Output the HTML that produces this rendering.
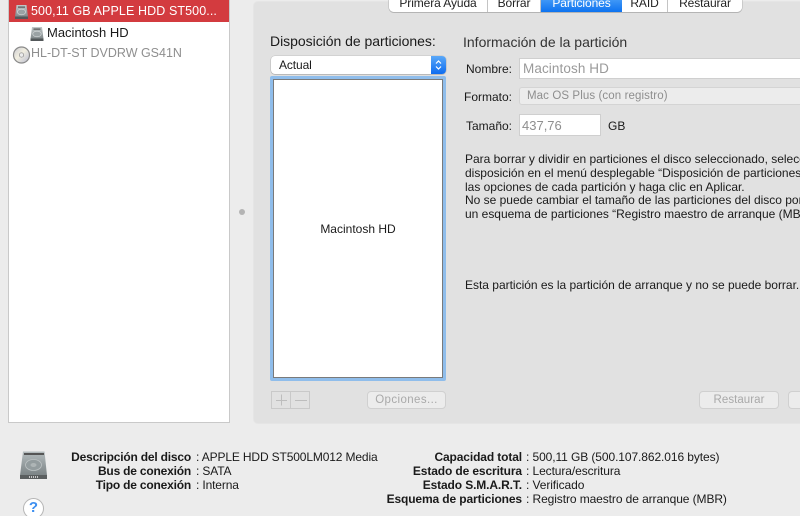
<!DOCTYPE html>
<html><head><meta charset="utf-8"><style>
html,body{margin:0;padding:0;width:800px;height:516px;overflow:hidden;background:#ececec}
body{position:relative;font-family:"Liberation Sans",sans-serif;color:#1a1a1a;font-size:12px}
#w{position:absolute;left:0;top:0;width:800px;height:516px;overflow:hidden;contain:paint}
.a{position:absolute;box-sizing:border-box}
.t{position:absolute;white-space:nowrap;line-height:14px}
.r{text-align:right}
.tab{position:absolute;top:0;height:11.500px;overflow:hidden;background:#fff;border-right:1px solid #c4c4c4;box-sizing:border-box;text-align:center;font-size:12px;letter-spacing:-.1px;line-height:6px;color:#222}
.btn{position:absolute;box-sizing:border-box;height:18px;border:1px solid #d0d0d0;border-radius:4px;background:#ececec;color:#a9a9a9;text-align:center;line-height:17px;font-size:11.500px}
.p{left:465px;font-size:12px;letter-spacing:-.01px;width:335px;overflow:hidden}
.lb{font-weight:bold;letter-spacing:-.2px;left:40px;width:151px}
.lv{left:196px;letter-spacing:-.14px}
.rb{font-weight:bold;letter-spacing:-.12px;left:340px;width:182px}
.rv{left:526px;letter-spacing:-.09px}
</style></head><body><div id="w">
<div class="a" style="left:8px;top:0;width:222px;height:423px;background:#fff;border:1px solid #c9c9c9;border-top:0"></div>
<div class="a" style="left:9px;top:0;width:220px;height:22px;background:#d33b3f"></div>
<svg class="a" style="left:0;top:0" width="60" height="66" viewBox="0 0 60 66">
<defs><linearGradient id="h" x1="0" y1="0" x2="0" y2="1"><stop offset="0" stop-color="#c2c9ca"/><stop offset="1" stop-color="#7f8789"/></linearGradient>
<linearGradient id="cd" x1="0" y1="0" x2="1" y2="1"><stop offset="0" stop-color="#c9c9d2"/><stop offset=".45" stop-color="#f1eee0"/><stop offset="1" stop-color="#b9bcd0"/></linearGradient></defs>
<path d="M16.500 5h10l1.500 12h-13z" fill="url(#h)"/><rect x="15" y="16.500" width="13" height="2.500" fill="#53585a"/><ellipse cx="21.500" cy="12" rx="4.200" ry="2.800" fill="#9aa2a4" stroke="#d8dcdd" stroke-width=".6"/><rect x="18" y="6.500" width="7" height="1.200" fill="#555"/>
<path d="M32 27h10l1.500 12h-13z" fill="url(#h)"/><rect x="30.500" y="38.500" width="13" height="2.500" fill="#53585a"/><ellipse cx="37" cy="34" rx="4.200" ry="2.800" fill="#9aa2a4" stroke="#d8dcdd" stroke-width=".6"/><rect x="33.500" y="28.500" width="7" height="1.200" fill="#555"/>
<circle cx="21.500" cy="55" r="8" fill="url(#cd)" stroke="#8a8a8a" stroke-width="1.200"/><circle cx="21.500" cy="55" r="2.200" fill="#ececec" stroke="#8a8a8a" stroke-width=".7"/>
</svg>
<div class="t" style="left:31px;top:4px;font-size:12.500px;color:#fff;letter-spacing:.1px">500,11 GB APPLE HDD ST500...</div>
<div class="t" style="left:47px;top:26px;font-size:13px">Macintosh HD</div>
<div class="t" style="left:31px;top:46px;font-size:12.500px;color:#8f8f8f">HL-DT-ST DVDRW GS41N</div>
<div class="a" style="left:239px;top:209px;width:6px;height:6px;border-radius:50%;background:#b4b4b4"></div>

<div class="a" style="left:254px;top:2px;width:546px;height:421px;background:#e1e1e1;border-radius:4px 0 0 4px;box-shadow:0 0 0 1px #e5e5e5"></div>
<div class="a" style="left:389px;top:0;width:353px;height:11.500px;background:#fff;border-radius:0 0 5px 5px;box-shadow:0 .5px 0 .5px #b4b4b4"></div>
<div class="tab" style="left:389px;width:99px;border-radius:0 0 0 5px">Primera Ayuda</div>
<div class="tab" style="left:488px;width:53px">Borrar</div>
<div class="tab" style="left:541px;width:81px;background:linear-gradient(#3f97f6,#0d72f0);color:#fff;border:0">Particiones</div>
<div class="tab" style="left:622px;width:46px">RAID</div>
<div class="tab" style="left:668px;width:74px;border-radius:0 0 5px 0;border-right:0">Restaurar</div>

<div class="t" style="left:270px;top:34px;font-size:14px;letter-spacing:-.03px">Disposición de particiones:</div>
<div class="t" style="left:463px;top:35px;font-size:14px;color:#333">Información de la partición</div>

<div class="a" style="left:271px;top:56px;width:175px;height:18px;background:#fff;border-radius:4px;box-shadow:0 .5px 1px #999,0 0 0 .5px #c4c4c4"></div>
<div class="a" style="left:431px;top:56px;width:15px;height:18px;background:linear-gradient(#5aa8f8,#0d6cf0);border-radius:0 4px 4px 0"></div>
<svg class="a" style="left:431px;top:56px" width="15" height="18"><path d="M5 7.500l2.500-2.500 2.500 2.500M5 10.500l2.500 2.500 2.500-2.500" fill="none" stroke="#fff" stroke-width="1.200"/></svg>
<div class="t" style="left:279px;top:58px;font-size:12px;letter-spacing:-.1px">Actual</div>

<div class="a" style="left:270px;top:76px;width:176px;height:305px;background:#8fbdeb;border-radius:2px"></div>
<div class="a" style="left:273px;top:79px;width:170px;height:299px;background:#fff;border:1px solid #7a7a7a"></div>
<div class="t" style="left:273px;width:170px;text-align:center;top:222px;font-size:12px">Macintosh HD</div>

<div class="a" style="left:271px;top:391px;width:39px;height:18px;border:1px solid #c9c9c9"></div>
<div class="a" style="left:290px;top:391px;width:1px;height:18px;background:#c9c9c9"></div>
<svg class="a" style="left:271px;top:391px" width="39" height="18"><path d="M10.500 3.500v11M5 9.500h11M24 9.500h12" stroke="#bdbdbd" stroke-width="1" fill="none"/></svg>
<div class="btn" style="left:367px;top:391px;width:79px;letter-spacing:.4px">Opciones...</div>

<div class="t r" style="left:440px;width:72px;top:62px;font-size:12px">Nombre:</div>
<div class="a" style="left:519px;top:58px;width:281px;height:21px;background:#fff;border:1px solid #cfcfcf;border-right:0"></div>
<div class="t" style="left:523px;top:62px;font-size:13.500px;color:#9a9a9a;letter-spacing:.1px">Macintosh HD</div>
<div class="t r" style="left:440px;width:72px;top:90px;font-size:12px">Formato:</div>
<div class="a" style="left:519px;top:87px;width:281px;height:18px;background:#ececec;border:1px solid #d4d4d4;border-right:0;border-radius:3px 0 0 3px"></div>
<div class="t" style="left:527px;top:89px;font-size:11.500px;color:#8e8e8e;letter-spacing:.1px">Mac OS Plus (con registro)</div>
<div class="t r" style="left:440px;width:72px;top:119px;font-size:12px">Tamaño:</div>
<div class="a" style="left:519px;top:114px;width:82px;height:22px;background:#fff;border:1px solid #cfcfcf"></div>
<div class="t" style="left:522px;top:119px;font-size:13px;color:#8e8e8e">437,76</div>
<div class="t" style="left:608px;top:119px;font-size:12px">GB</div>

<div class="t p" style="top:152px">Para borrar y dividir en particiones el disco seleccionado, selecciona</div>
<div class="t p" style="top:166px">disposición en el menú desplegable “Disposición de particiones”, ajusta</div>
<div class="t p" style="top:180px">las opciones de cada partición y haga clic en Aplicar.</div>
<div class="t p" style="top:193px">No se puede cambiar el tamaño de las particiones del disco porque usa</div>
<div class="t p" style="top:207px">un esquema de particiones “Registro maestro de arranque (MBR)”.</div>
<div class="t p" style="top:278px">Esta partición es la partición de arranque y no se puede borrar.</div>

<div class="btn" style="left:699px;top:391px;width:80px;letter-spacing:.05px">Restaurar</div>
<div class="a" style="left:788px;top:391px;width:12px;height:18px;border:1px solid #d0d0d0;border-right:0;border-radius:4px 0 0 4px;background:#ececec"></div>

<svg class="a" style="left:18px;top:450px" width="32" height="32"><defs><linearGradient id="g" x1="0" y1="0" x2="0" y2="1"><stop offset="0" stop-color="#b4bcbe"/><stop offset="1" stop-color="#7b8385"/></linearGradient></defs><path d="M5 1.500h21.500l2.500 24h-27z" fill="url(#g)"/><rect x="2" y="25" width="27" height="4" fill="#5a5e5f"/><path d="M11 27h10" stroke="#c8c8c8" stroke-width="2" stroke-dasharray="1 1"/><ellipse cx="15.500" cy="15" rx="8" ry="5.500" fill="#939c9e" stroke="#bcc2c3" stroke-width=".8"/><ellipse cx="15.500" cy="15" rx="3" ry="2" fill="#aeb5b6"/><rect x="6" y="3" width="20" height="2" fill="#555"/></svg>
<div class="a" style="left:23px;top:498px;width:21px;height:21px;border-radius:50%;background:#fff;border:1px solid #b5b5b5"></div>
<div class="t" style="left:23px;width:21px;text-align:center;top:501px;font-size:15px;color:#3d8ff0;font-weight:bold">?</div>

<div class="t r lb" style="top:450px">Descripción del disco</div><div class="t lv" style="top:450px">: APPLE HDD ST500LM012 Media</div>
<div class="t r lb" style="top:464px">Bus de conexión</div><div class="t lv" style="top:464px">: SATA</div>
<div class="t r lb" style="top:478px">Tipo de conexión</div><div class="t lv" style="top:478px">: Interna</div>

<div class="t r rb" style="top:450px">Capacidad total</div><div class="t rv" style="top:450px">: 500,11 GB (500.107.862.016 bytes)</div>
<div class="t r rb" style="top:464px">Estado de escritura</div><div class="t rv" style="top:464px">: Lectura/escritura</div>
<div class="t r rb" style="top:478px">Estado S.M.A.R.T.</div><div class="t rv" style="top:478px">: Verificado</div>
<div class="t r rb" style="top:492px">Esquema de particiones</div><div class="t rv" style="top:492px">: Registro maestro de arranque (MBR)</div>
</div></body></html>
